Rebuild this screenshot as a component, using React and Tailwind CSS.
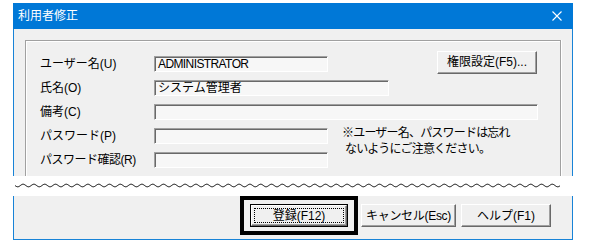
import React from 'react'

const font = { fontFamily: '"Liberation Sans", "Noto Sans CJK JP", sans-serif' }

function Field({ w, value, className = '' }) {
  return (
    <div
      className={`h-[16px] ${w} border border-t-[#a0a0a0] border-l-[#a0a0a0] border-r-white border-b-white bg-[#f7f7f7] shadow-[inset_1px_1px_0_#696969] pl-[3px] text-[12px] leading-[14px] text-black whitespace-nowrap overflow-hidden ${className}`}
    >
      {value}
    </div>
  )
}

function Btn({ w, children, className = '' }) {
  return (
    <div
      className={`h-[23px] ${w} flex items-center justify-center border border-t-white border-l-white border-r-[#696969] border-b-[#696969] shadow-[inset_-1px_-1px_0_#a0a0a0] bg-[#f0f0f0] text-[12px] text-black whitespace-nowrap ${className}`}
    >
      {children}
    </div>
  )
}

function Wave() {
  // tilde line drawn across the cut
  let d = ''
  for (let x = 0; x <= 545; x += 0.5) {
    const y = 2.5 + 1.3 * Math.sin((2 * Math.PI * x) / 10.8)
    d += (x === 0 ? 'M' : 'L') + x + ',' + y.toFixed(2)
  }
  return (
    <svg width="546" height="6" viewBox="0 0 546 6" className="block">
      <path d={d} fill="none" stroke="#000" strokeWidth="1" />
    </svg>
  )
}

export default function App() {
  const rows = [
    { label: 'ユーザー名(U)', w: 'w-[174px]', value: 'ADMINISTRATOR', cls: 'tracking-[-0.6px]' },
    { label: '氏名(O)', w: 'w-[235px]', value: 'システム管理者' },
    { label: '備考(C)', w: 'w-[384px]', value: '' },
  ]

  return (
    <div className="w-[591px] h-[242px] bg-white overflow-hidden" style={font}>
      {/* upper part of the dialog */}
      <div className="pt-[3px] pl-[13px]">
        <div className="w-[560px] h-[173px] flex flex-col border-x border-[#1883d7] bg-[#f0f0f0]">
          <div className="h-[26px] -mx-px bg-[#0078d7] flex items-center justify-between pl-[5px] pr-[11px] shrink-0">
            <span className="text-[12px] text-white leading-none">利用者修正</span>
            <svg width="10" height="10" viewBox="0 0 10 10">
              <path d="M0.5 0.5 L9.5 9.5 M9.5 0.5 L0.5 9.5" stroke="#fff" strokeWidth="1.1" />
            </svg>
          </div>

          <div className="flex-1 pt-[11px] px-[11px] overflow-hidden">
            <div className="h-full border-t border-x border-[#a0a0a0] shadow-[inset_1px_1px_0_#fff,1px_0_0_#fff] pt-[11px] pl-[14px] pr-[20px]">
              {rows.map((r, i) => (
                <div key={r.label} className="h-[24px] flex items-center">
                  <span className="w-[114px] text-[12px] text-black whitespace-nowrap">{r.label}</span>
                  <Field w={r.w} value={r.value} className={r.cls || ''} />
                  {i === 0 && (
                    <Btn w="w-[100px]" className="ml-auto mr-[3px] mb-[4px]">
                      権限設定(F5)...
                    </Btn>
                  )}
                </div>
              ))}
              <div className="flex">
                <div>
                  <div className="h-[24px] flex items-center">
                    <span className="w-[114px] text-[12px] text-black whitespace-nowrap">パスワード(P)</span>
                    <Field w="w-[174px]" value="" />
                  </div>
                  <div className="h-[24px] flex items-center">
                    <span className="w-[114px] text-[12px] text-black whitespace-nowrap tracking-[-0.5px]">パスワード確認(R)</span>
                    <Field w="w-[174px]" value="" />
                  </div>
                </div>
                <div className="ml-[14px] pt-[1px] text-[12px] leading-[16px] text-black tracking-[-0.8px] whitespace-nowrap">
                  <div>※ユーザー名、パスワードは忘れ</div>
                  <div className="pl-[3px]">ないようにご注意ください。</div>
                </div>
              </div>
            </div>
          </div>
        </div>
      </div>

      {/* cut band */}
      <div className="h-[20px] bg-white flex items-center pl-[15px]">
        <Wave />
      </div>

      {/* lower part of the dialog */}
      <div className="pl-[13px]">
        <div className="w-[560px] h-[44px] border-x border-b border-[#1883d7] bg-[#f0f0f0] flex items-start">
          <div className="ml-[226px] w-[118px] h-[39px] border-[4px] border-black flex items-center justify-center">
            <div className="w-[98px] h-[23px] border border-black">
              <div className="w-full h-full border border-t-white border-l-white border-r-[#696969] border-b-[#696969] shadow-[inset_-1px_-1px_0_#a0a0a0] bg-[#f0f0f0] p-[2px]">
                <div className="w-full h-full border border-dotted border-black flex items-center justify-center text-[12px] text-black">
                  登録(F12)
                </div>
              </div>
            </div>
          </div>
          <Btn w="w-[95px]" className="ml-[3px] mt-[8px] tracking-[-0.3px]">キャンセル(Esc)</Btn>
          <Btn w="w-[90px]" className="ml-[5px] mt-[8px]">ヘルプ(F1)</Btn>
        </div>
      </div>
    </div>
  )
}
